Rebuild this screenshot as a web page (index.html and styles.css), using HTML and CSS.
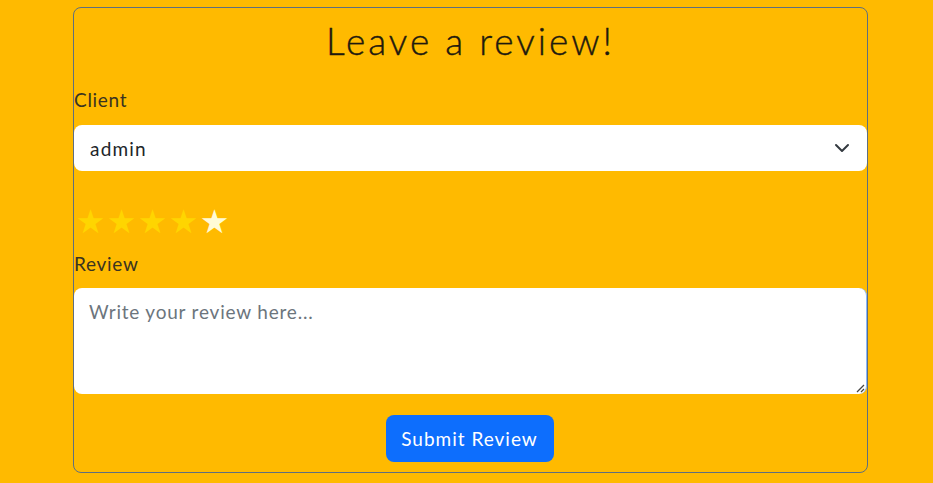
FILE: index.html
```html
<!DOCTYPE html>
<html>
<head>
<meta charset="utf-8">
<link rel="stylesheet" href="styles.css">
</head>
<body>
<form class="card">
  <h2 class="title">Leave a review!</h2>
  <label class="label label-client">Client</label>
  <div class="select">
    <span class="select-value">admin</span>
    <svg class="chevron" width="16" height="16" viewBox="0 0 16 16"><path d="M2 5l6 6 6-6" fill="none" stroke="#343a40" stroke-width="2" stroke-linecap="round" stroke-linejoin="round"/></svg>
  </div>
  <div class="stars">
    <span class="star on">★</span><span class="star on">★</span><span class="star on">★</span><span class="star on">★</span><span class="star hover">★</span>
  </div>
  <label class="label label-review">Review</label>
  <div class="textarea">
    <span class="placeholder">Write your review here...</span>
    <svg class="grip" width="10" height="10" viewBox="0 0 10 10"><path d="M9 2L2 9M9 6L6 9" stroke="#444" stroke-width="1.3"/></svg>
  </div>
  <div class="actions">
    <button type="button" class="btn">Submit Review</button>
  </div>
</form>
</body>
</html>
```

FILE: styles.css
```css
html, body {
  margin: 0;
  padding: 0;
  background: #ffba00;
}
body {
  padding: 7px 0 0 73px;
  font-family: Lato, "Liberation Sans", sans-serif;
  color: #212529;
}
.card {
  box-sizing: border-box;
  width: 795px;
  height: 466px;
  border: 1px solid #5f6f7f;
  border-radius: 8px;
  display: flex;
  flex-direction: column;
}
.title {
  margin: 13px 0 0;
  text-align: center;
  font-weight: 300;
  font-size: 37px;
  line-height: 40px;
  letter-spacing: 3px;
  color: #1f1a0e;
  -webkit-text-stroke: 0.4px #1f1a0e;
}
.label {
  display: block;
  font-size: 19px;
  font-weight: 400;
  line-height: 24px;
  color: #3a3320;
  letter-spacing: 0.7px;
}
.label-client { margin-top: 27px; }
.select {
  margin-top: 13px;
  height: 46px;
  background: #fff;
  border-radius: 8px;
  display: flex;
  align-items: center;
  padding: 0 17px 0 16px;
}
.select-value {
  flex: 1;
  font-size: 19px;
  color: #212529;
  letter-spacing: 1.2px;
}
.stars {
  margin-top: 35px;
  height: 32px;
  display: flex;
  padding-left: 1px;
}
.star {
  font-family: "DejaVu Sans", sans-serif;
  font-size: 33px;
  line-height: 32px;
  width: 31px;
  text-align: center;
}
.star.on { color: #ffd500; }
.star.hover { color: #fffbd6; }
.label-review { margin-top: 14px; }
.textarea {
  margin-top: 12px;
  height: 106px;
  box-sizing: border-box;
  background: #fff;
  border-radius: 8px;
  border-right: 1px solid #86b7fe;
  position: relative;
  padding: 12px 15px;
}
.placeholder {
  font-size: 19px;
  color: #6c757d;
  letter-spacing: 0.8px;
}
.grip {
  position: absolute;
  right: 1px;
  bottom: 1px;
}
.actions {
  display: flex;
  justify-content: center;
  margin-top: 21px;
  padding-right: 2px;
}
.btn {
  width: 168px;
  height: 47px;
  border: none;
  border-radius: 8px;
  background: #0d6efd;
  color: #fff;
  font-family: Lato, "Liberation Sans", sans-serif;
  font-size: 19px;
  letter-spacing: 1px;
  padding: 0;
}
```
